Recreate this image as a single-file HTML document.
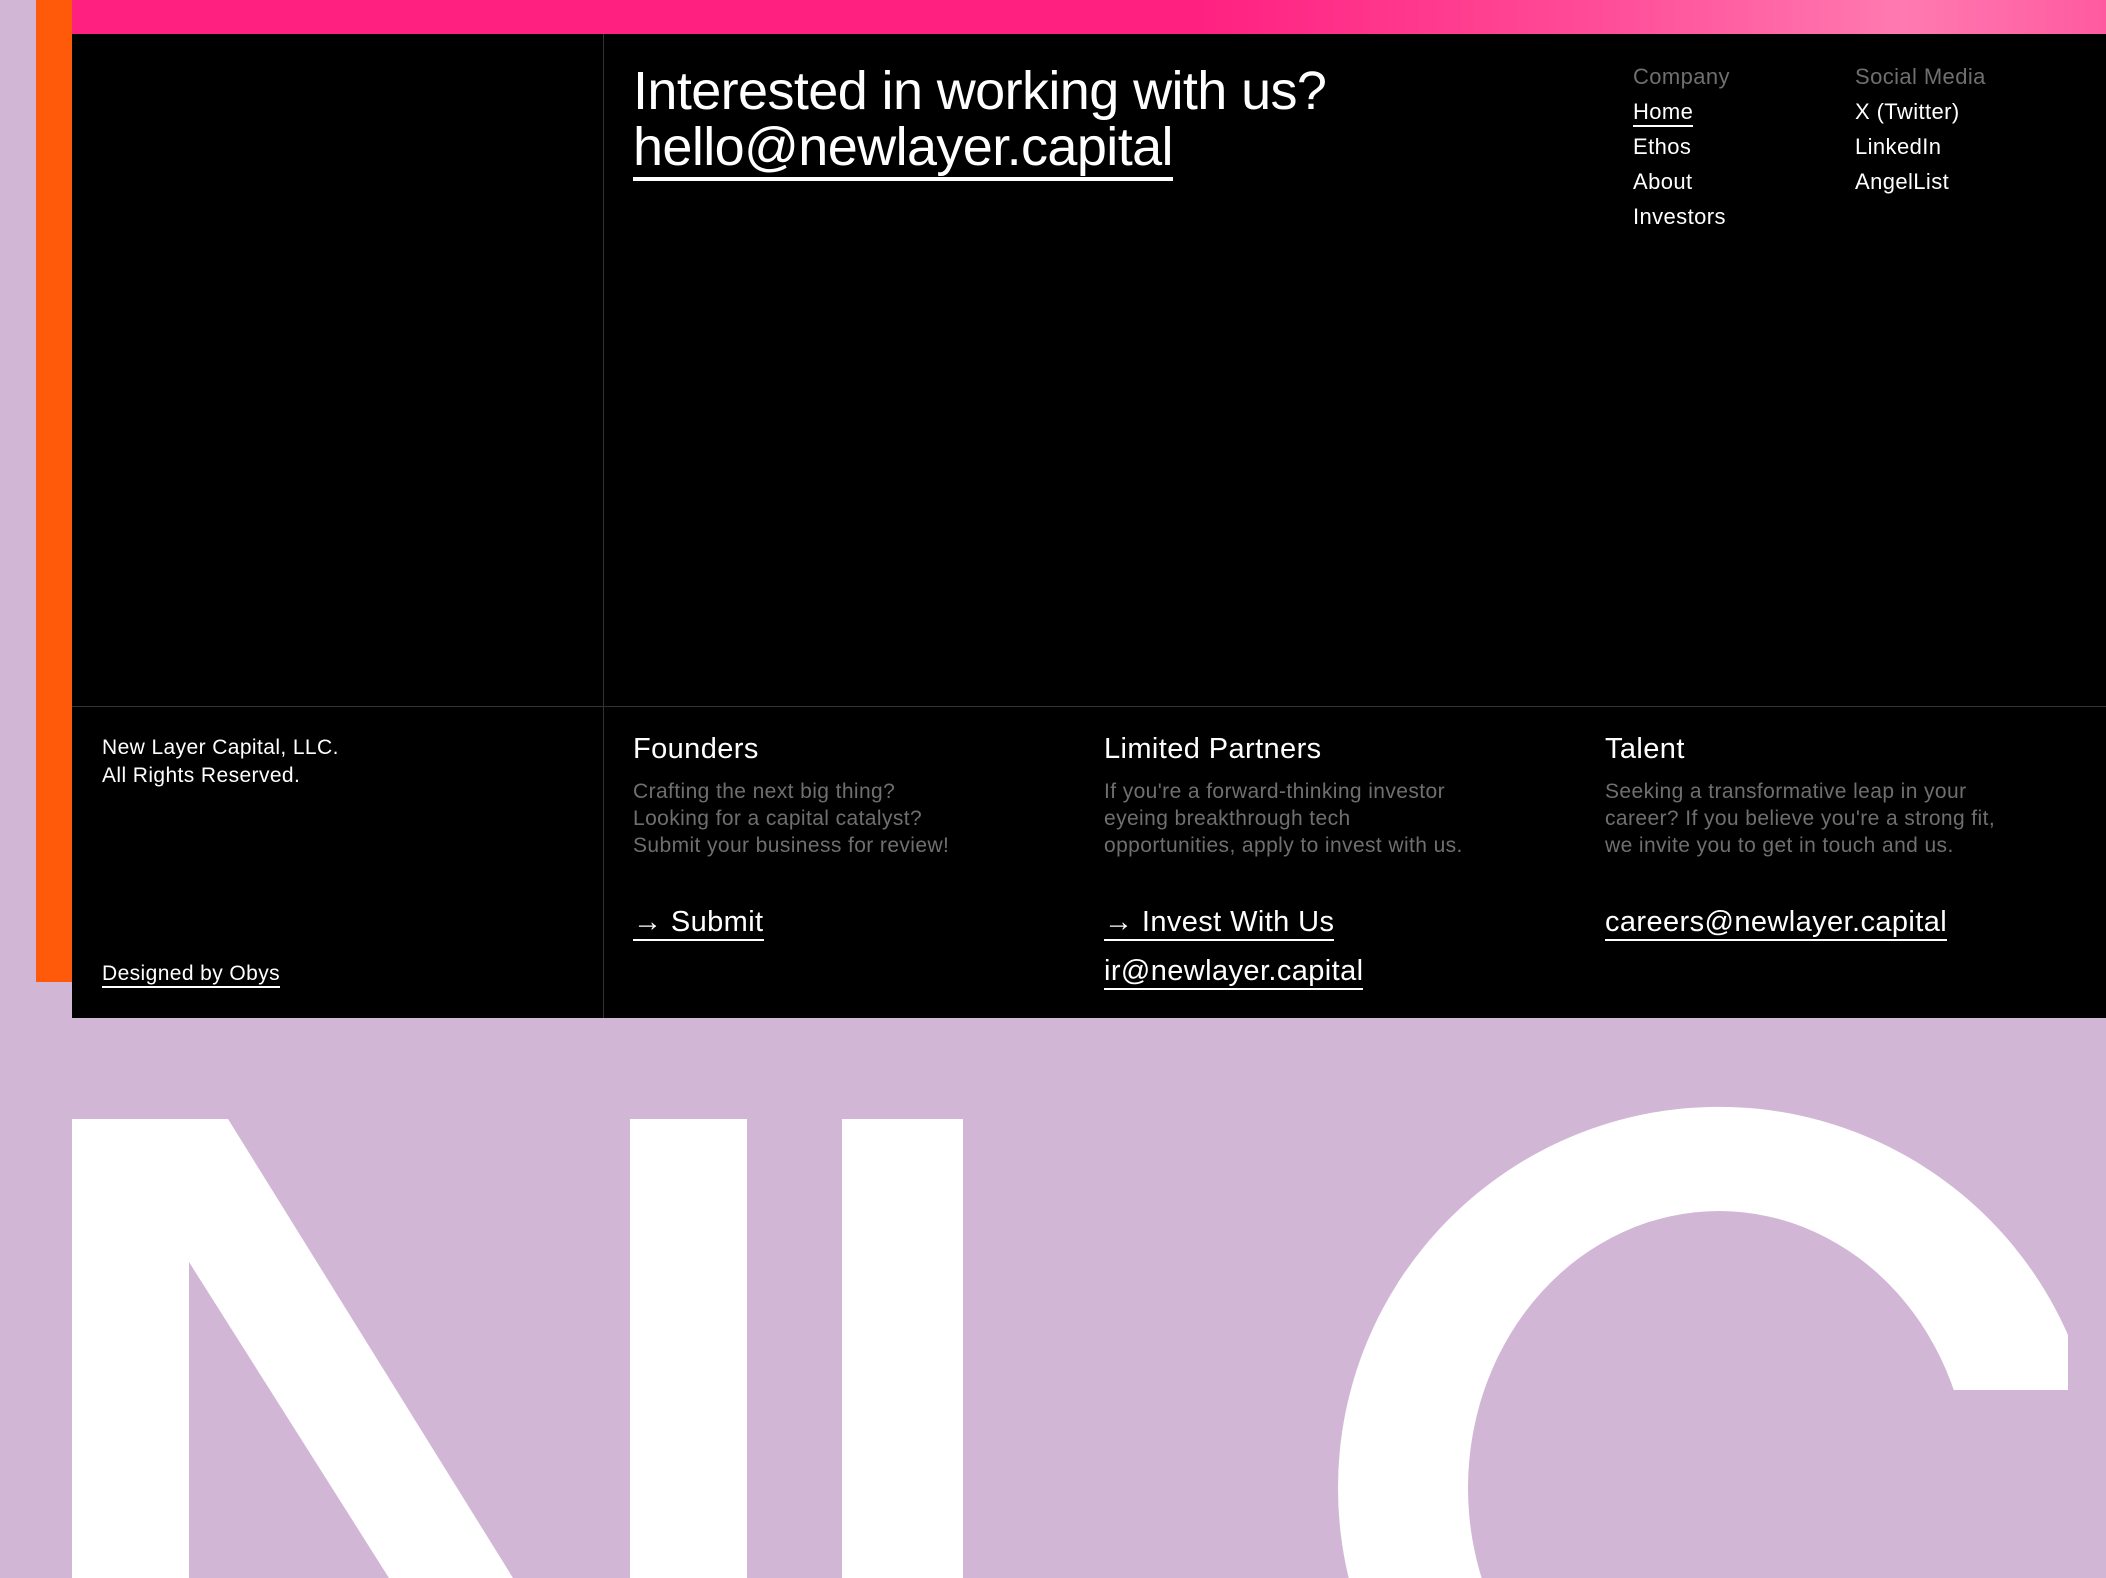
<!DOCTYPE html>
<html><head><meta charset="utf-8"><style>
*{margin:0;padding:0;box-sizing:border-box}
html,body{width:2106px;height:1578px;overflow:hidden}
body{background:#d2b6d6;font-family:"Liberation Sans",sans-serif;position:relative}
.a{position:absolute;white-space:nowrap}
.w{color:#fff}
.g{color:#6f6f6f}
.u{border-bottom:2px solid #fff;padding-bottom:1px}
.t{letter-spacing:0.4px}
</style></head><body>
<div class="a" style="left:72px;top:0;width:2034px;height:34px;background:linear-gradient(90deg,#ff2080 0%,#ff2080 55%,#ff4c98 75%,#ff7ab0 90%,#ff5aa0 100%)"></div>
<div class="a" style="left:36px;top:0;width:36px;height:982px;background:#ff5a0a"></div>
<div class="a" style="left:72px;top:34px;width:2034px;height:984px;background:#000"></div>
<div class="a" style="left:603px;top:34px;width:1px;height:984px;background:#333"></div>
<div class="a" style="left:72px;top:706px;width:2034px;height:1px;background:#333"></div>

<div class="a w" style="left:633px;top:63px;font-size:54px;line-height:56px;letter-spacing:-0.6px">Interested in working with us?</div>
<div class="a w" style="left:633px;top:119px;font-size:54px;line-height:56px;letter-spacing:-0.6px"><span style="border-bottom:4px solid #fff">hello@newlayer.capital</span></div>

<div class="a g t" style="left:1633px;top:59px;font-size:22px;line-height:35px">Company<br><span class="w u">Home</span><br><span class="w">Ethos</span><br><span class="w">About</span><br><span class="w">Investors</span></div>
<div class="a g t" style="left:1855px;top:59px;font-size:22px;line-height:35px">Social Media<br><span class="w">X (Twitter)</span><br><span class="w">LinkedIn</span><br><span class="w">AngelList</span></div>

<div class="a w t" style="left:102px;top:734px;font-size:21px;line-height:28px">New Layer Capital, LLC.<br>All Rights Reserved.</div>
<div class="a w t" style="left:102px;top:962px;font-size:21px"><span class="u">Designed by Obys</span></div>

<div class="a w t" style="left:633px;top:733px;font-size:29px">Founders</div>
<div class="a g t" style="left:633px;top:778px;font-size:21px;line-height:27px">Crafting the next big thing?<br>Looking for a capital catalyst?<br>Submit your business for review!</div>
<div class="a w t" style="left:633px;top:906px;font-size:29px"><span class="u">→ Submit</span></div>

<div class="a w t" style="left:1104px;top:733px;font-size:29px">Limited Partners</div>
<div class="a g t" style="left:1104px;top:778px;font-size:21px;line-height:27px">If you're a forward-thinking investor<br>eyeing breakthrough tech<br>opportunities, apply to invest with us.</div>
<div class="a w t" style="left:1104px;top:906px;font-size:29px"><span class="u">→ Invest With Us</span></div>
<div class="a w t" style="left:1104px;top:955px;font-size:29px"><span class="u">ir@newlayer.capital</span></div>

<div class="a w t" style="left:1605px;top:733px;font-size:29px">Talent</div>
<div class="a g t" style="left:1605px;top:778px;font-size:21px;line-height:27px">Seeking a transformative leap in your<br>career? If you believe you're a strong fit,<br>we invite you to get in touch and us.</div>
<div class="a w t" style="left:1605px;top:906px;font-size:29px"><span class="u">careers@newlayer.capital</span></div>

<svg class="a" style="left:0;top:1018px" width="2106" height="560" viewBox="0 1018 2106 560">
<polygon fill="#fff" points="72,1119 228,1119 513,1578 389,1578 189,1262 189,1578 72,1578"/>
<rect fill="#fff" x="630" y="1119" width="117" height="459"/>
<rect fill="#fff" x="842" y="1119" width="121" height="459"/>
<path fill="#fff" fill-rule="evenodd" d="M1338,1488 a381,381 0 1,0 762,0 a381,381 0 1,0 -762,0 Z M1468,1488 a251,277 0 1,0 502,0 a251,277 0 1,0 -502,0 Z"/>
<rect fill="#d2b6d6" x="1940" y="1390" width="166" height="188"/>
<rect fill="#d2b6d6" x="2068" y="1018" width="38" height="560"/>
</svg>
</body></html>
